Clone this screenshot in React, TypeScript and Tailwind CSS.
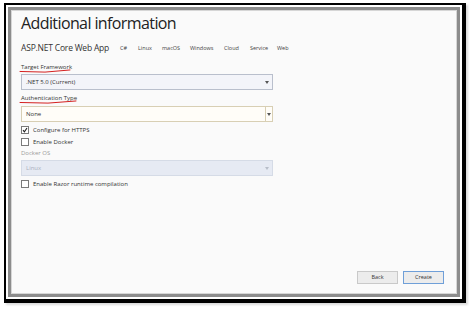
import React from "react";

function Scribble({ w }: { w: number }) {
  return (
    <svg width={w} height="5" viewBox={"0 0 " + w + " 5"} className="block">
      <path d={"M1 2.5 Q " + w / 2 + " 4.5 " + (w - 1) + " 1"} stroke="#d42020" strokeWidth="1" fill="none" strokeLinecap="round" />
    </svg>
  );
}

function Arrow({ color }: { color: string }) {
  return (
    <svg width="4" height="3" viewBox="0 0 4 3"><path d="M0 0 L4 0 L2 3 Z" fill={color} /></svg>
  );
}

function Check({ on, label }: { on?: boolean; label: string }) {
  return (
    <div className="flex items-center gap-[4px] h-[12px]">
      <div className="w-[8px] h-[8px] border border-[#7a7a7a] bg-white flex items-center justify-center">
        {on && (
          <svg width="6" height="6" viewBox="0 0 6 6"><path d="M1 3.2 L2.4 4.8 L5 1" stroke="#222" strokeWidth="1.1" fill="none" /></svg>
        )}
      </div>
      <span className="text-[6px] text-[#333] whitespace-nowrap">{label}</span>
    </div>
  );
}

export default function App() {
  return (
    <div className="w-[474px] h-[309px] bg-white pl-[4px] pt-[3px]" style={{ fontFamily: "'Open Sans', 'Noto Sans', sans-serif" }}>
      <div className="w-[462px] h-[300px] border-black border-t-2 border-l-2 border-r-4 border-b-4 p-[2px] bg-white shadow-[2px_2px_2px_rgba(0,0,0,0.15)]">
        <div className="w-full h-full border-[3px] border-[#8c8c8c]">
          <div className="w-full h-full border border-[#d6d6d6] bg-[#fafafa] pl-[9px] pr-[8px] flex flex-col">
            <h1 className="text-[16px] leading-none text-[#222] mt-[4px] tracking-[-0.6px] whitespace-nowrap">Additional information</h1>
            <div className="flex items-center mt-[11px] h-[12px]">
              <span className="text-[8.5px] text-[#333] w-[99px] tracking-[-0.2px] whitespace-nowrap">ASP.NET Core Web App</span>
              <div className="flex text-[5.5px] text-[#444] whitespace-nowrap">
                <span className="w-[18px]">C#</span>
                <span className="w-[24px]">Linux</span>
                <span className="w-[28px]">macOS</span>
                <span className="w-[34px]">Windows</span>
                <span className="w-[26px]">Cloud</span>
                <span className="w-[27px]">Service</span>
                <span>Web</span>
              </div>
            </div>

            <div className="mt-[10px] text-[6px] text-[#333] leading-none">Target Framework</div>
            <div className="-mt-[1px] -ml-[2px]"><Scribble w={52} /></div>
            <div className="w-[252px] h-[16px] border border-[#b9bfcc] bg-[#f3f4f9] flex items-center pl-[4px] pr-[3px]">
              <span className="flex-1 text-[6px] text-[#333]">.NET 5.0 (Current)</span>
              <Arrow color="#555" />
            </div>

            <div className="mt-[5px] text-[6px] text-[#333] leading-none">Authentication Type</div>
            <div className="-mt-[1px] -ml-[2px]"><Scribble w={58} /></div>
            <div className="w-[252px] h-[16px] mt-[1px] border border-[#d8cfb4] bg-[#fffdf8] flex items-center pl-[4px]">
              <span className="flex-1 text-[6px] text-[#333]">None</span>
              <div className="h-full border-l border-[#d8cfb4] w-[7px] flex items-center justify-center"><Arrow color="#555" /></div>
            </div>

            <div className="mt-[2px] flex flex-col gap-0">
              <Check on label="Configure for HTTPS" />
              <Check label="Enable Docker" />
            </div>
            <div className="mt-[2px] text-[6px] text-[#9a9a9a] leading-none">Docker OS</div>
            <div className="w-[252px] h-[16px] mt-[4px] border border-[#d5dbe6] bg-[#e6eaf3] flex items-center pl-[4px] pr-[3px]">
              <span className="flex-1 text-[6px] text-[#aab0bd]">Linux</span>
              <Arrow color="#b8bec9" />
            </div>
            <div className="mt-[2px]"><Check label="Enable Razor runtime compilation" /></div>

            <div className="flex-1" />
            <div className="flex justify-end gap-[5px] mb-[9px] pr-[4px]">
              <button className="w-[41px] h-[13px] border border-[#c9c9c9] bg-[#ececec] text-[5.5px] text-[#333]">Back</button>
              <button className="w-[41px] h-[13px] border border-[#6f9fd8] bg-[#ececec] text-[5.5px] text-[#333]">Create</button>
            </div>
          </div>
        </div>
      </div>
    </div>
  );
}
